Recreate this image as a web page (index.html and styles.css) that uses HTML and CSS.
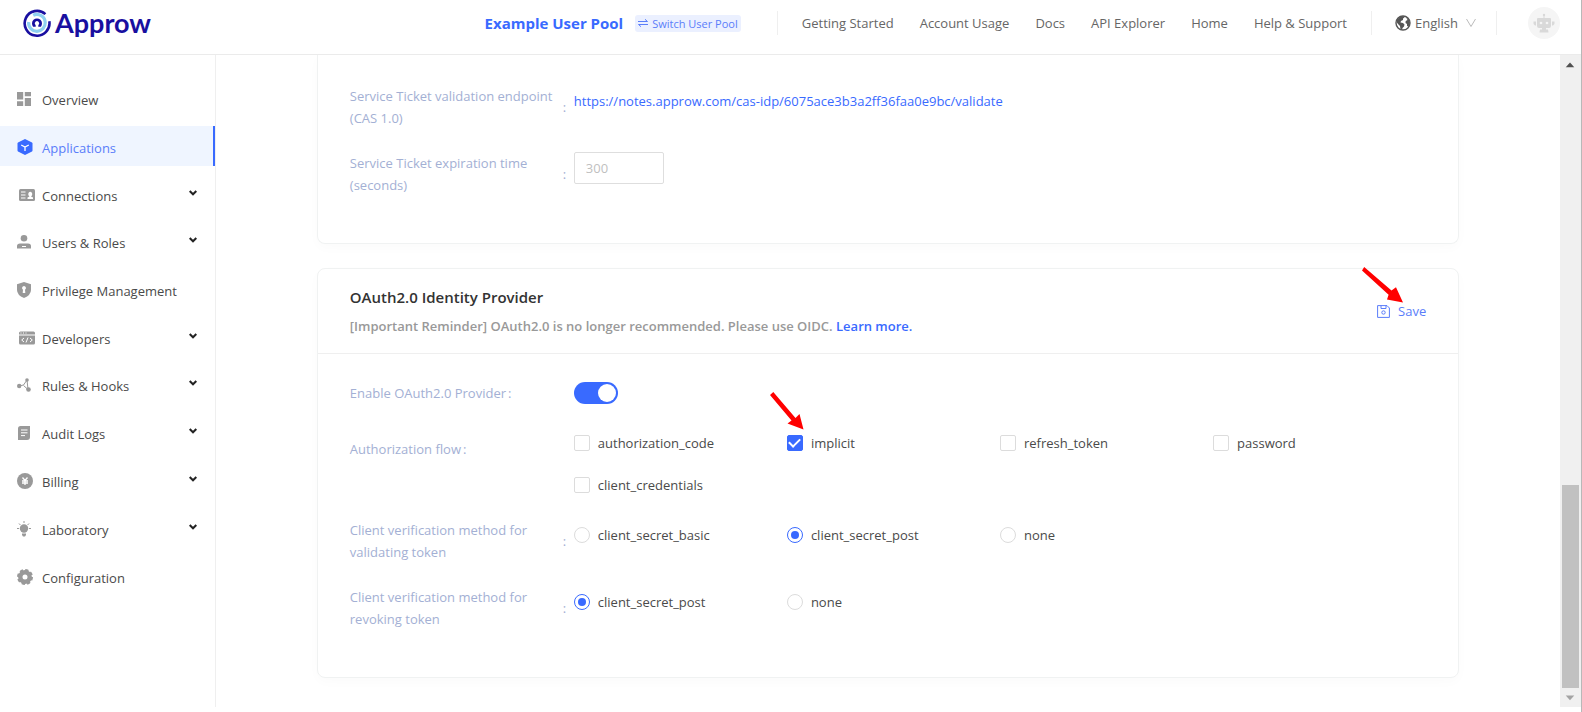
FILE: index.html
```html
<!DOCTYPE html>
<html lang="en">
<head>
<meta charset="utf-8">
<title>Approw Console</title>
<link rel="stylesheet" href="styles.css">
</head>
<body>
<div class="app">
  <header class="topbar">
    <a class="logo" href="#" aria-label="Approw">
      <svg class="logo-mark" viewBox="0 0 28 28" fill="none">
        <path d="M22.4 5.1A12.4 12.4 0 1 0 26.3 12.2" stroke="#190fa0" stroke-width="2.6"/>
        <path d="M10.2 6.3A8.3 8.3 0 0 1 22.2 13.6A8.3 8.3 0 0 1 14 22.3A8.3 8.3 0 0 1 5.7 13" stroke="#8fd0f0" stroke-width="3.2"/>
        <path d="M11.300 17.800V16.800A3.600 3.600 0 1 1 16.700 16.800V17.800" stroke="#190fa0" stroke-width="2.800"/>
      </svg>
      <span class="logo-text">Approw</span>
    </a>
    <div class="pool">
      <strong class="pool-name">Example User Pool</strong>
      <button class="pool-switch" type="button">
        <svg class="swap" viewBox="0 0 10 8" fill="none" stroke="currentColor"><path d="M0 2.5H9.5L7 .3M10 5.5H.5L3 7.7"/></svg>
        Switch User Pool
      </button>
    </div>
    <nav class="topnav">
      <a href="#">Getting Started</a>
      <a href="#">Account Usage</a>
      <a href="#">Docs</a>
      <a href="#">API Explorer</a>
      <a href="#">Home</a>
      <a href="#">Help &amp; Support</a>
    </nav>
    <div class="lang">
      <svg class="globe" viewBox="0 0 16 16"><circle cx="8" cy="8" r="7" fill="#fff" stroke="#555" stroke-width="1.4"/><path fill="#555" d="M2 4.5L5 1.8L8.5 1L9.5 2.5L8 3.5V5L6 6L5.5 7.5L8 8L9.5 9.5L9 11.5L7.5 13L7 15L5.5 14.5L5 11L3 9L1.500 7ZM11 2L14.500 5L15 8L13.500 11.500L12 11V9L10.500 8L10.700 6L12.500 5Z"/></svg>
      <select class="lang-select" aria-label="Language"><option>English</option></select>
      <svg class="lang-arrow" viewBox="0 0 10 10" fill="none" stroke="#bbb"><path d="M.5 1L5 8.500L9.500 1"/></svg>
    </div>
    <button class="avatar" type="button" aria-label="Account">
      <svg viewBox="0 0 32 32" fill="#d9d9d9"><circle cx="16" cy="8" r="1.200"/><path d="M15.500 8h1v4h-1zM9 12q0-1 1-1h12q1 0 1 1v7q0 2-2 2H11q-2 0-2-2zM5.500 14.500h2.500v4H7q-1.500-1-1.500-2zM26.500 14.500H24v4h1q1.500-1 1.500-2zM14 21h4v1.500h2l.5 3h-9l.5-3h2z"/><circle cx="13" cy="16" r="1.300" fill="#f5f5f5"/><circle cx="19" cy="16" r="1.300" fill="#f5f5f5"/></svg>
    </button>
  </header>

  <div class="body">
    <nav class="sidebar">
      <ul class="menu">
        <li><a class="item" href="#"><svg class="ico" viewBox="0 0 14 14"><path d="M0 0h6.200v7.500H0zM7.800 0H14v4.200H7.800zM0 9.300h6.200V14H0zM7.800 6H14v8H7.800z"/></svg>Overview</a></li>
        <li><a class="item active" href="#"><svg class="ico ico-l" viewBox="0 0 16 16"><path d="M8 0L15 3.500Q15.500 3.800 15.500 4.500V11.500Q15.500 12.200 15 12.500L8 16L1 12.500Q.5 12.200 .5 11.500V4.500Q.5 3.800 1 3.500Z"/><path d="M4.200 6L8 8L11.800 6M8 8V12" fill="none" stroke="#fff" stroke-width="1.300"/></svg>Applications</a></li>
        <li class="wide"><a class="item" href="#"><svg class="ico" viewBox="0 0 16 12"><rect width="16" height="12" rx="1.500"/><path d="M2 3h4.500M2 6h4.500M2 9h4.500" stroke="#fff"/><path fill="#fff" d="M8.500 10V8.500L10.500 7.500A2 2.500 0 1 1 12 7.500L14 8.500V10Z"/></svg>Connections<svg class="chev" viewBox="0 0 8 6"><path d="M.7 1L4 4.300L7.300 1"/></svg></a></li>
        <li><a class="item" href="#"><svg class="ico" viewBox="0 0 14 14"><circle cx="7" cy="3.300" r="3.300"/><path d="M0 13.500V11Q0 8.500 3 8.500H11Q14 8.500 14 11V13.500Z"/><path d="M5 11.500h4" stroke="#fff"/></svg>Users &amp; Roles<svg class="chev" viewBox="0 0 8 6"><path d="M.7 1L4 4.300L7.300 1"/></svg></a></li>
        <li><a class="item" href="#"><svg class="ico ico-s" viewBox="0 0 14 16"><path d="M7 0L14 2.200V8Q14 13 7 16Q0 13 0 8V2.200Z"/><path fill="#fff" d="M7 4A2 2 0 0 1 8 7.700L8.300 11H5.700L6 7.700A2 2 0 0 1 7 4"/></svg>Privilege Management</a></li>
        <li class="wide"><a class="item" href="#"><svg class="ico" viewBox="0 0 16 13"><path d="M1.500 0h13Q16 0 16 1.500V3H0V1.500Q0 0 1.500 0ZM0 4h16v7.500q0 1.500-1.500 1.500h-13Q0 13 0 11.500Z"/><path d="M1.500 1.500h1M4 1.500h1M6.500 1.500h1M5 6.500L2.700 8.500L5 10.500M11 6.500L13.300 8.500L11 10.500M9 6L7 11" fill="none" stroke="#fff"/></svg>Developers<svg class="chev" viewBox="0 0 8 6"><path d="M.7 1L4 4.300L7.300 1"/></svg></a></li>
        <li><a class="item" href="#"><svg class="ico" viewBox="0 0 14 14"><circle cx="2.200" cy="8" r="2.200"/><circle cx="10" cy="2" r="1.800"/><circle cx="11.500" cy="11.500" r="2.300"/><path d="M2 8L6.500 7L10 2M10 2L11 11.500L6.500 7.500" fill="none" stroke="#999"/></svg>Rules &amp; Hooks<svg class="chev" viewBox="0 0 8 6"><path d="M.7 1L4 4.300L7.300 1"/></svg></a></li>
        <li><a class="item" href="#"><svg class="ico" viewBox="0 0 14 14"><path d="M3.500 0H13V11Q13 14 10 14H1V2.500Q1 0 3.500 0Z"/><path d="M4 4h6.500M4 6.800h6.500M4 9.600h4" stroke="#fff"/></svg>Audit Logs<svg class="chev" viewBox="0 0 8 6"><path d="M.7 1L4 4.300L7.300 1"/></svg></a></li>
        <li><a class="item" href="#"><svg class="ico ico-l" viewBox="0 0 16 16"><circle cx="8" cy="8" r="8"/><path d="M5.500 4.500L8 7.500L10.500 4.500M5 8h6M5 10h6M8 7.500V12" fill="none" stroke="#fff" stroke-width="1.300"/></svg>Billing<svg class="chev" viewBox="0 0 8 6"><path d="M.7 1L4 4.300L7.300 1"/></svg></a></li>
        <li><a class="item" href="#"><svg class="ico ico-s" viewBox="0 0 14 16"><circle cx="7" cy="7.500" r="4.200"/><path d="M5 12.500h4v1.500L8 15.500H6L5 14Z"/><path d="M7 0v2M0 7.500h2M12 7.500h2M2 2.500L3.400 4M12 2.500L10.600 4" stroke="#999"/></svg>Laboratory<svg class="chev" viewBox="0 0 8 6"><path d="M.7 1L4 4.300L7.300 1"/></svg></a></li>
        <li><a class="item" href="#"><svg class="ico ico-l" viewBox="0 0 16 16"><circle cx="8" cy="8" r="4.700" fill="none" stroke="#999" stroke-width="4.400"/><circle cx="8" cy="8" r="6.800" fill="none" stroke="#999" stroke-width="2.400" stroke-dasharray="3.200 2.140"/></svg>Configuration</a></li>
      </ul>
    </nav>

    <main class="content">
      <section class="card card-cas">
        <div class="row">
          <div class="label"><span class="label-text">Service Ticket validation endpoint (CAS 1.0)</span><span class="colon">:</span></div>
          <a class="endpoint" href="#">https://notes.approw.com/cas-idp/6075ace3b3a2ff36faa0e9bc/validate</a>
        </div>
        <div class="row">
          <label class="label" for="expire"><span class="label-text">Service Ticket expiration time (seconds)</span><span class="colon">:</span></label>
          <input class="num" id="expire" type="text" placeholder="300">
        </div>
      </section>

      <section class="card">
        <div class="card-head">
          <div>
            <h2 class="title">OAuth2.0 Identity Provider</h2>
            <p class="note">[Important Reminder] OAuth2.0 is no longer recommended. Please use OIDC. <a href="#">Learn more.</a></p>
          </div>
          <button class="save" type="button">
            <svg class="disk" viewBox="0 0 13 13" fill="none" stroke="currentColor"><path d="M1 .6H10L12.400 3V12.400H.6V.6ZM4 .6V3.500H9V.6"/><circle cx="6.500" cy="7.500" r="1.700"/></svg>
            Save
            <svg class="arrow arrow-save" viewBox="0 0 42 36"><path d="M2.200 0L29.500 23.500L34 20.300L41 35.500L25 32.500L26.600 27.700L0 3.500Z" fill="#f00"/></svg>
          </button>
        </div>
        <div class="card-body">
          <div class="row">
            <label class="label" for="enable"><span class="label-text">Enable OAuth2.0 Provider</span><span class="colon-wide">:</span></label>
            <input class="switch" id="enable" type="checkbox" role="switch" checked>
          </div>
          <div class="row row-flow">
            <div class="label"><span class="label-text">Authorization flow</span><span class="colon-wide">:</span></div>
            <div class="options">
              <label class="opt"><input class="box" type="checkbox">authorization_code</label>
              <label class="opt"><input class="box" type="checkbox" checked>implicit
                <svg class="arrow arrow-flow" viewBox="0 0 34 38"><path d="M3.300 0L25.500 26L29.500 22L33.500 37.500L17.500 31.500L21.500 28.500L0 3Z" fill="#f00"/></svg>
              </label>
              <label class="opt"><input class="box" type="checkbox">refresh_token</label>
              <label class="opt"><input class="box" type="checkbox">password</label>
              <label class="opt"><input class="box" type="checkbox">client_credentials</label>
            </div>
          </div>
          <div class="row">
            <div class="label"><span class="label-text">Client verification method for validating token</span><span class="colon">:</span></div>
            <div class="options">
              <label class="opt"><input class="dot" type="radio" name="validate">client_secret_basic</label>
              <label class="opt"><input class="dot" type="radio" name="validate" checked>client_secret_post</label>
              <label class="opt"><input class="dot" type="radio" name="validate">none</label>
            </div>
          </div>
          <div class="row">
            <div class="label"><span class="label-text">Client verification method for revoking token</span><span class="colon">:</span></div>
            <div class="options">
              <label class="opt"><input class="dot" type="radio" name="revoke" checked>client_secret_post</label>
              <label class="opt"><input class="dot" type="radio" name="revoke">none</label>
            </div>
          </div>
        </div>
      </section>
    </main>

    <div class="scroll" aria-hidden="true">
      <svg class="scroll-btn" viewBox="0 0 20 20"><path d="M5.500 13L10 8L14.500 13Z" fill="#505050"/></svg>
      <div class="thumb"></div>
      <svg class="scroll-btn" viewBox="0 0 20 20"><path d="M5.500 8L10 13L14.500 8Z" fill="#a3a3a3"/></svg>
    </div>
  </div>
</div>
</body>
</html>
```

FILE: styles.css
```css
* { box-sizing: border-box; }
body {
  margin: 0;
  background: #fff;
  color: #4a4a4a;
  font-family: "Open Sans", "Noto Sans", sans-serif;
  font-size: 13px;
  line-height: 22px;
}
a { color: inherit; text-decoration: none; }
button, input, select { font: inherit; color: inherit; margin: 0; }
button { padding: 0; border: 0; background: none; }

.app {
  display: flex;
  flex-direction: column;
  height: 100vh;
  overflow: hidden;
  padding-bottom: 5px;
  border-right: 1px solid #b8b8b8;
}

/* Top bar */
.topbar {
  flex: none;
  display: flex;
  align-items: center;
  height: 55px;
  padding: 0 21px 8px 23px;
  border-bottom: 1px solid #ebebeb;
  color: #666;
}
.logo { display: flex; align-items: center; gap: 4px; }
.logo-mark { width: 28px; height: 28px; }
.logo-text { font: 700 27px/28px Lato, sans-serif; color: #190fa0; }
.pool { display: flex; align-items: center; gap: 12px; margin-left: auto; }
.pool-name { font-size: 15px; color: #396aff; }
.pool-switch {
  display: flex;
  align-items: center;
  gap: 4px;
  padding: 0 3px;
  border-radius: 3px;
  background: #ebf0ff;
  color: #5a7dfa;
  font-size: 11px;
  line-height: 17px;
}
.swap { width: 10px; height: 8px; }
.topnav {
  display: flex;
  align-items: center;
  gap: 26px;
  height: 24px;
  margin-left: 36px;
  padding: 0 24px;
  border: solid #efefef;
  border-width: 0 1px;
}
.lang {
  display: flex;
  align-items: center;
  height: 24px;
  padding: 0 20px 0 23px;
  border-right: 1px solid #efefef;
}
.globe { width: 16px; height: 16px; margin-right: 4px; }
.lang-select { appearance: none; border: 0; padding: 0; background: none; }
.lang-arrow { width: 10px; height: 10px; margin-left: 8px; }
.avatar { width: 32px; height: 32px; margin-left: 31px; border-radius: 50%; background: #f5f5f5; }
.avatar svg { display: block; }

/* Sidebar */
.body { flex: 1; display: flex; min-height: 0; }
.sidebar { flex: none; width: 216px; border-right: 1px solid #efefef; }
.menu { list-style: none; margin: 0; padding: 23px 0 0; }
.menu li { margin-bottom: 8px; }
.menu .wide { margin-bottom: 7px; }
.item { display: flex; align-items: center; height: 40px; padding: 3px 18px 0 17px; }
.ico { flex: none; width: 14px; height: 14px; margin: 0 11px 2px 0; fill: #999; }
.ico-s { height: 16px; }
.ico-l { width: 16px; height: 16px; margin-right: 9px; }
.wide .ico { width: 16px; margin-left: 2px; margin-right: 7px; }
.active { border-right: 2px solid #396aff; background: #eff5ff; color: #5a7dfa; }
.active .ico { fill: #396aff; }
.chev { width: 8px; height: 6px; margin: 0 0 5px auto; fill: none; stroke: #222; stroke-width: 2; }

/* Cards */
.content {
  flex: 1;
  display: flex;
  flex-direction: column;
  align-items: center;
  gap: 24px;
  min-width: 0;
  overflow: hidden;
}
.card {
  width: 85%;
  border: 1px solid #f0f2f2;
  border-radius: 8px;
  box-shadow: 0 4px 12px rgba(0, 40, 40, 0.02);
}
.card-cas { border-top: 0; border-radius: 0 0 8px 8px; padding: 30px 32px 24px; }
.card-head {
  display: flex;
  align-items: center;
  justify-content: space-between;
  padding: 16px 32px;
  border-bottom: 1px solid #efefef;
}
.title { margin: 0; font-size: 15px; font-weight: 600; line-height: 24px; color: #333; }
.note { margin: 6px 0 0; font-weight: 600; color: #999; }
.note a { color: #396aff; }
.save { position: relative; display: flex; align-items: center; gap: 8px; color: #5a7dfa; }
.disk { width: 13px; height: 13px; }
.card-body { padding: 28px 32px 24px; }

/* Form rows */
.row { display: grid; grid-template-columns: 224px 1fr; align-items: start; margin-bottom: 23px; }
.label { display: flex; align-items: center; color: #a3b0d4; }
.label-text { max-width: 212px; }
.colon { padding-left: 1px; }
.colon-wide { padding-left: 2px; }
.endpoint { margin-top: 5px; color: #396aff; }
.num {
  width: 90px;
  height: 32px;
  padding: 0 11px;
  border: 1px solid #dedede;
  border-radius: 2px;
  background: #fff;
}
.num::placeholder { color: #bfbfbf; }
.row-flow .label { margin-top: 11px; }
.options { display: grid; grid-template-columns: repeat(4, 1fr); row-gap: 20px; padding-top: 5px; }
.opt { position: relative; display: flex; align-items: center; gap: 8px; }
.box, .dot {
  appearance: none;
  display: grid;
  place-items: center;
  width: 16px;
  height: 16px;
  border: 1px solid #dcdcdc;
  border-radius: 2px;
  background: #fff;
}
.box:checked { border-color: #396aff; background: #396aff; }
.box:checked::after {
  content: "";
  width: 9px;
  height: 5px;
  margin-bottom: 3px;
  border: solid #fff;
  border-width: 0 0 2px 2px;
  transform: rotate(-45deg);
}
.dot { border-radius: 50%; }
.dot:checked { border-color: #396aff; }
.dot:checked::after { content: ""; width: 8px; height: 8px; border-radius: 50%; background: #396aff; }
.switch {
  appearance: none;
  display: flex;
  justify-content: flex-end;
  width: 44px;
  height: 22px;
  padding: 2px;
  border-radius: 11px;
  background: #396aff;
}
.switch::after { content: ""; width: 18px; height: 18px; border-radius: 50%; background: #fff; }

/* Pointers */
.arrow { position: absolute; pointer-events: none; }
.arrow-save { width: 42px; height: 36px; right: 22px; bottom: 19px; }
.arrow-flow { width: 34px; height: 38px; left: -17px; bottom: 24px; }

/* Scroll bar */
.scroll { flex: none; display: flex; flex-direction: column; width: 21px; background: #f0f0f0; }
.scroll-btn { width: 20px; height: 19px; }
.thumb { flex: none; height: 203px; margin: auto 2px 0; background: #c1c1c1; }
```
